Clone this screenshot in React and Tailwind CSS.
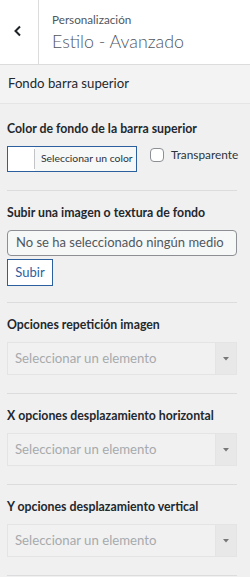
import React from "react";

const font = { fontFamily: 'Lato, "Open Sans", sans-serif' };

function Select() {
  return (
    <div className="flex h-[33px] w-full border border-[#e4e4e4] bg-[#f1f1f1]">
      <div className="flex flex-1 items-center pl-[7px] text-[13.2px] whitespace-nowrap text-[#a7aaad]">
        Seleccionar un elemento
      </div>
      <div className="flex w-[21px] items-center justify-center border-l border-[#e4e4e4] bg-[#e8e8e8]">
        <svg width="6" height="4" viewBox="0 0 6 4">
          <path d="M0 0H6L3 3.5Z" fill="#777" />
        </svg>
      </div>
    </div>
  );
}

function SelectSection({ label }) {
  return (
    <div className="flex flex-col border-b border-[#dcdcde] pt-[12px] pb-[18px]">
      <div className="mb-[7px] h-[20px] leading-[20px] text-[12.3px] font-bold whitespace-nowrap text-[#23282d]">{label}</div>
      <Select />
    </div>
  );
}

export default function App() {
  return (
    <div className="min-h-[577px] w-[250px] bg-[#f0f0f1]" style={font}>
      <div className="flex h-[65px] border-b border-[#dcdcde] bg-white">
        <div className="flex w-[39px] items-center justify-center border-r border-[#dcdcde]">
          <svg width="10" height="12" viewBox="0 0 10 12" className="ml-[-3px] mt-[-2px]">
            <path d="M7 1.5L2.5 6L7 10.5" stroke="#1d2327" strokeWidth="2" fill="none" />
          </svg>
        </div>
        <div className="flex flex-col pl-[13px] pt-[11px]">
          <div className="text-[11.7px] leading-[16px] text-[#50575e]">Personalización</div>
          <div className="text-[17.8px] leading-[28px] font-light text-[#50575e]">Estilo - Avanzado</div>
        </div>
      </div>
      <div className="flex h-[39px] items-center border-b border-[#e5e5e5] bg-[#f3f3f4] pl-[8px] text-[13.2px] text-[#23282d]">
        Fondo barra superior
      </div>
      <div className="flex flex-col pl-[7px] pr-[13px]">
        <div className="flex flex-col border-b border-[#dcdcde] pt-[15px] pb-[18px]">
          <div className="mb-[7px] h-[20px] leading-[20px] text-[12.3px] font-bold whitespace-nowrap text-[#23282d]">
            Color de fondo de la barra superior
          </div>
          <div className="flex items-start">
            <div className="flex h-[26px] w-[130px] shrink-0 border border-[#2c5f9e] bg-white">
              <div className="my-[2px] w-[27px] shrink-0 border-r border-[#c3c4c7] bg-white" />
              <div className="flex flex-1 items-center whitespace-nowrap bg-[#f6f7f7] pl-[6px] text-[10.4px] text-[#2c3338]">
                Seleccionar un color
              </div>
            </div>
            <div className="ml-[13px] mt-[2px] h-[14px] w-[14px] shrink-0 rounded-[4px] border border-[#8c8f94] bg-white" />
            <div className="ml-[7px] shrink-0 whitespace-nowrap text-[11.8px] leading-[18px] text-[#2c3338]">Transparente</div>
          </div>
        </div>
        <div className="flex flex-col border-b border-[#dcdcde] pt-[12px] pb-[16px]">
          <div className="mb-[7px] h-[20px] leading-[20px] text-[12.3px] font-bold whitespace-nowrap text-[#23282d]">
            Subir una imagen o textura de fondo
          </div>
          <div className="flex h-[26px] items-center whitespace-nowrap rounded-[4px] border border-[#8c8f94] bg-[#f6f7f7] pl-[8px] text-[13px] text-[#50575e]">
            No se ha seleccionado ningún medio
          </div>
          <div className="mt-[3px] flex h-[27px] w-[46px] items-center justify-center border border-[#2c5f9e] bg-white text-[13px] text-[#2c5f9e]">
            Subir
          </div>
        </div>
        <SelectSection label="Opciones repetición imagen" />
        <SelectSection label="X opciones desplazamiento horizontal" />
        <SelectSection label="Y opciones desplazamiento vertical" />
      </div>
    </div>
  );
}
